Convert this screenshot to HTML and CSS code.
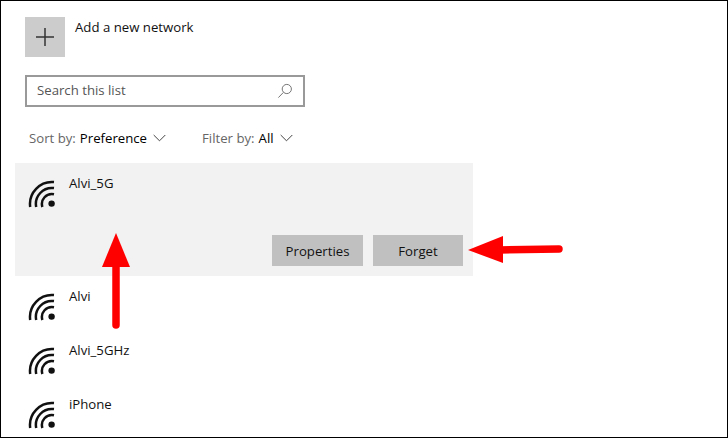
FILE: index.html
```html
<!DOCTYPE html>
<html lang="en">
<head>
    <meta charset="UTF-8">
    <meta name="viewport" content="width=device-width, initial-scale=1.0">
    <title>Manage known networks</title>
    <link rel="stylesheet" href="styles.css">
</head>
<body>
    <svg width="0" height="0" class="defs">
        <symbol id="wifi" viewBox="0 0 28 28">
            <path d="M2.2 27A22 22 0 0 1 26 2.1M8.2 27A16 16 0 0 1 26 8.1M14.4 27A10 10 0 0 1 26 14.2" fill="none" stroke="#111" stroke-width="2.5"/>
            <circle cx="23.6" cy="23.6" r="3.2" fill="#111"/>
        </symbol>
    </svg>
    <div class="frame">
        <div class="add-network">
            <div class="add-tile">
                <svg width="18" height="18" viewBox="0 0 18 18"><path d="M9 0V18M0 9H18" stroke="#333" stroke-width="1.5"/></svg>
            </div>
            <span class="add-label">Add a new network</span>
        </div>
        <div class="search">
            <span class="search-text">Search this list</span>
            <svg width="16" height="16" viewBox="0 0 16 16"><circle cx="9.8" cy="6" r="4.6" fill="none" stroke="#777"/><path d="M6.4 9.4L1.4 14.6" stroke="#777"/></svg>
        </div>
        <div class="filters">
            <div class="filter">
                <span class="filter-label">Sort by:</span>
                <span class="filter-value">Preference</span>
                <svg class="chevron" width="13" height="8" viewBox="0 0 13 8"><path d="M.7 1L6.5 6.8L12.3 1" fill="none" stroke="#444"/></svg>
            </div>
            <div class="filter">
                <span class="filter-label">Filter by:</span>
                <span class="filter-value">All</span>
                <svg class="chevron" width="13" height="8" viewBox="0 0 13 8"><path d="M.7 1L6.5 6.8L12.3 1" fill="none" stroke="#444"/></svg>
            </div>
        </div>
        <ul class="networks">
            <li class="network selected">
                <div class="network-main">
                    <svg class="wifi-icon" width="28" height="28"><use href="#wifi"/></svg>
                    <span class="network-name">Alvi_5G</span>
                </div>
                <div class="network-actions">
                    <button class="action action-properties">Properties</button>
                    <button class="action action-forget">Forget</button>
                </div>
            </li>
            <li class="network">
                <div class="network-main">
                    <svg class="wifi-icon" width="28" height="28"><use href="#wifi"/></svg>
                    <span class="network-name">Alvi</span>
                </div>
            </li>
            <li class="network">
                <div class="network-main">
                    <svg class="wifi-icon" width="28" height="28"><use href="#wifi"/></svg>
                    <span class="network-name">Alvi_5GHz</span>
                </div>
            </li>
            <li class="network">
                <div class="network-main">
                    <svg class="wifi-icon" width="28" height="28"><use href="#wifi"/></svg>
                    <span class="network-name">iPhone</span>
                </div>
            </li>
        </ul>
        <svg class="annotation" width="728" height="438" viewBox="0 0 728 438">
            <path d="M116 265V325" stroke="#f00" stroke-width="7.5" stroke-linecap="round"/>
            <path d="M116 233L130 267H102Z" fill="#f00"/>
            <path d="M500 250L559 249" stroke="#f00" stroke-width="7.5" stroke-linecap="round"/>
            <path d="M468 250L503 236V263Z" fill="#f00"/>
        </svg>
    </div>
</body>
</html>
```

FILE: styles.css
```css
* {
    box-sizing: border-box;
}

body {
    margin: 0;
    font-family: "Open Sans", "Noto Sans", Arial, sans-serif;
    font-size: 13.2px;
    color: #111;
    background-color: #fff;
}

.defs {
    position: absolute;
}

.frame {
    position: relative;
    width: 728px;
    height: 438px;
    overflow: hidden;
    border: 1px solid #000;
    padding-top: 16px;
}

.add-network {
    display: flex;
    margin-left: 24px;
    gap: 10px;
}

.add-tile {
    display: flex;
    justify-content: center;
    align-items: center;
    width: 40px;
    height: 40px;
    background-color: #ccc;
}

.add-label {
    line-height: 20px;
}

.search {
    display: flex;
    justify-content: space-between;
    align-items: center;
    width: 280px;
    height: 32px;
    margin: 18px 0 0 24px;
    padding: 0 10px;
    border: 2px solid #999;
    color: #555;
}

.search-text {
    padding-bottom: 2px;
}

.filters {
    display: flex;
    gap: 36px;
    margin: 21px 0 0 28px;
    height: 20px;
    line-height: 20px;
}

.filter {
    display: flex;
    align-items: center;
    gap: 4px;
}

.filter-label {
    color: #666;
}

.filter-value {
    color: #000;
}

.chevron {
    margin-left: 2px;
}

.networks {
    list-style: none;
    margin: 15px 0 0 14px;
    padding: 0;
    width: 458px;
}

.network {
    height: 54px;
}

.network.selected {
    height: 113px;
    background-color: #f2f2f2;
}

.network-main {
    display: flex;
    gap: 13px;
    padding: 10px 0 0 13px;
}

.wifi-icon {
    margin-top: 7px;
}

.network-name {
    line-height: 20px;
}

.network-actions {
    display: flex;
    justify-content: flex-end;
    gap: 10px;
    margin: 27px 10px 0 0;
}

.action {
    height: 31px;
    padding: 0;
    border: none;
    background-color: #c0c0c0;
    color: #111;
    font: inherit;
}

.action-properties {
    width: 91px;
}

.action-forget {
    width: 90px;
}

.annotation {
    position: absolute;
    top: -1px;
    left: -1px;
}
```
